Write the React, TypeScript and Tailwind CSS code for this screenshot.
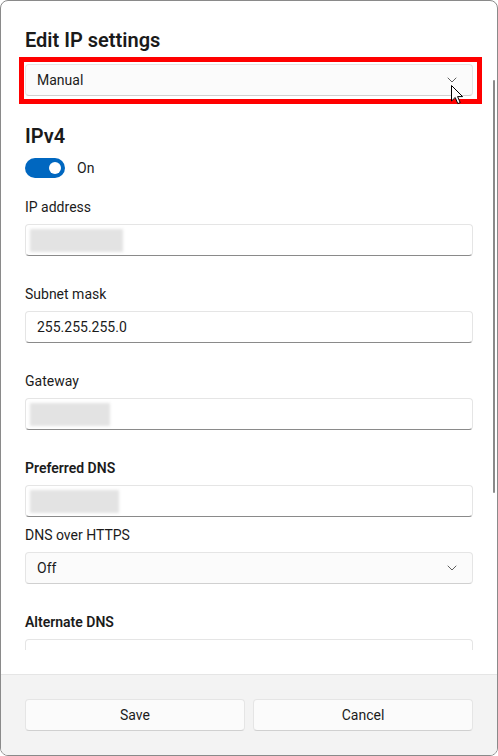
import { ReactNode } from 'react';

const font = { fontFamily: '"Segoe UI", Roboto, "Noto Sans", sans-serif' };

function Chevron() {
  return (
    <svg width="10" height="6" viewBox="0 0 10 6" fill="none" className="text-[#5f5f5f]">
      <path d="M1 1 L5 5 L9 1" stroke="currentColor" strokeWidth="1" strokeLinecap="round" strokeLinejoin="round" />
    </svg>
  );
}

function Dropdown({ value }: { value: string }) {
  return (
    <div className="flex h-8 items-center justify-between rounded-[4px] border border-[#e5e5e5] border-b-[#d0d0d0] bg-[#fbfbfb] pl-[11px] pr-[15px] text-[14px] text-[#1b1b1b]">
      <span>{value}</span>
      <Chevron />
    </div>
  );
}

// text box; a blurred block stands in for a hidden address
function TextBox({ value, blur }: { value?: string; blur?: string }) {
  return (
    <div className="flex h-8 items-center rounded-[4px] border border-[#e5e5e5] border-b-[#8a8a8a] bg-white pl-[11px] text-[14px] text-[#1b1b1b]">
      {value && <span>{value}</span>}
      {blur && <div className={`-ml-[7px] h-[23px] ${blur} bg-[#e3e3e3] blur-[1.5px]`} />}
    </div>
  );
}

function Field({ label, bold, top, children }: { label: string; bold?: boolean; top: string; children: ReactNode }) {
  return (
    <div className={top}>
      <div className={`h-5 text-[14px] leading-5 text-[#1b1b1b] ${bold ? 'font-semibold' : ''}`}>{label}</div>
      <div className="mt-[7px]">{children}</div>
    </div>
  );
}

function Cursor() {
  return (
    <svg width="13" height="20" viewBox="0 0 13 20" className="absolute left-[450px] top-[84px]">
      <path d="M0.5 0.5 L0.5 16 L4.2 12.5 L6.8 18.6 L9.2 17.6 L6.6 11.6 L11.6 11.6 Z" fill="#fff" stroke="#000" strokeWidth="1" strokeLinejoin="round" />
    </svg>
  );
}

export default function App() {
  return (
    <div className="h-[756px] w-[498px] bg-white" style={font}>
      <div className="relative flex h-[756px] w-[498px] flex-col overflow-hidden rounded-[8px] border border-[#8a8a8a] bg-white">
        <div className="relative min-h-0 flex-1 pb-6">
          <div className="h-full overflow-hidden px-6 pt-[25px]">
            <h1 className="text-[20px] font-semibold leading-7 text-[#1a1a1a]">Edit IP settings</h1>
            <div className="mt-[10px]">
              <Dropdown value="Manual" />
            </div>

            <h2 className="mt-[26px] text-[20px] font-semibold leading-7 text-[#1a1a1a]">IPv4</h2>
            <div className="mt-2 flex h-5 items-center gap-3">
              <div className="flex h-5 w-10 items-center justify-end rounded-full bg-[#0067c0] pr-1">
                <div className="h-3 w-3 rounded-full bg-white" />
              </div>
              <span className="text-[14px] text-[#1b1b1b]">On</span>
            </div>

            <Field label="IP address" top="mt-[19px]">
              <TextBox blur="w-[93px]" />
            </Field>
            <Field label="Subnet mask" top="mt-7">
              <TextBox value="255.255.255.0" />
            </Field>
            <Field label="Gateway" top="mt-7">
              <TextBox blur="w-[80px]" />
            </Field>
            <Field label="Preferred DNS" bold top="mt-7">
              <TextBox blur="w-[89px]" />
            </Field>
            <Field label="DNS over HTTPS" top="mt-2">
              <Dropdown value="Off" />
            </Field>
            <Field label="Alternate DNS" bold top="mt-7">
              <TextBox />
            </Field>
          </div>

          {/* scrollbar thumb */}
          <div className="absolute right-[2px] top-[79px] h-[413px] w-[2px] rounded-full bg-[#8a8a8a]" />

          {/* highlight around the mode picker */}
          <div className="absolute left-[18px] top-[56px] h-[47px] w-[463px] border-[5px] border-[#ff0000]" />
        </div>

        <div className="grid h-[81px] grid-cols-2 gap-2 border-t border-[#e5e5e5] bg-[#f3f3f3] px-6 pt-6">
          <button className="h-8 rounded-[4px] border border-[#e5e5e5] border-b-[#d0d0d0] bg-[#fbfbfb] text-[14px] text-[#1b1b1b]">Save</button>
          <button className="h-8 rounded-[4px] border border-[#e5e5e5] border-b-[#d0d0d0] bg-[#fbfbfb] text-[14px] text-[#1b1b1b]">Cancel</button>
        </div>

        <Cursor />
      </div>
    </div>
  );
}
